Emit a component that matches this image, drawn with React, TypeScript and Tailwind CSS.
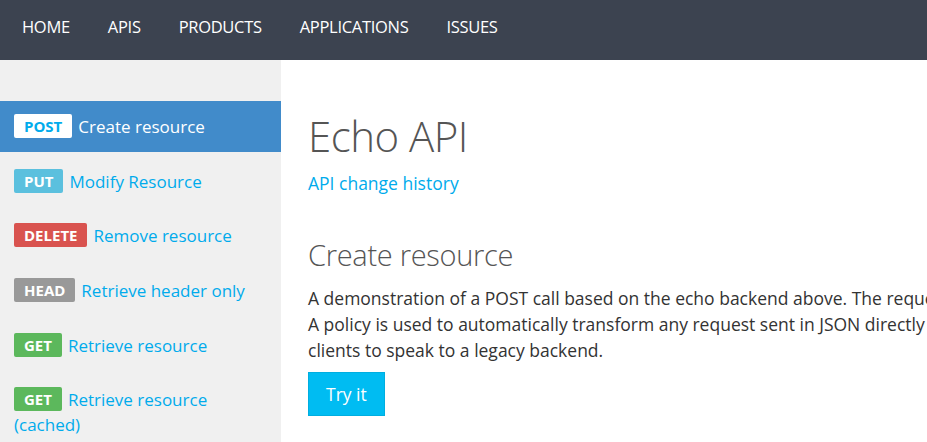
import React from "react";

const items = [
  { m: "POST", t: "Create resource", badge: "bg-white text-[#00abec]", active: true },
  { m: "PUT", t: "Modify Resource", badge: "bg-[#5bc0de] text-white" },
  { m: "DELETE", t: "Remove resource", badge: "bg-[#d9534f] text-white" },
  { m: "HEAD", t: "Retrieve header only", badge: "bg-[#999999] text-white" },
  { m: "GET", t: "Retrieve resource", badge: "bg-[#5cb85c] text-white" },
  { m: "GET", t: "Retrieve resource (cached)", badge: "bg-[#5cb85c] text-white" },
];

export default function App() {
  return (
    <div className="w-[927px] h-[442px] overflow-hidden bg-white flex flex-col" style={{ fontFamily: '"Open Sans", "Noto Sans", sans-serif' }}>
      <nav className="h-[60px] bg-[#3c4350] flex items-center pl-[3px] pb-[5px] shrink-0">
        {["HOME", "APIS", "PRODUCTS", "APPLICATIONS", "ISSUES"].map((n) => (
          <a key={n} className="px-[19px] text-white text-[16.5px] tracking-[-0.3px]">{n}</a>
        ))}
      </nav>
      <div className="flex flex-1 min-h-0">
        <aside className="w-[281px] shrink-0 bg-[#f0f0f0] pt-[41px] flex flex-col gap-[3.7px]">
          {items.map((it, i) => (
            <div
              key={i}
              className={`min-h-[51px] pl-[14px] pr-2 pt-[13px] text-[17px] leading-[25px] ${it.active ? "bg-[#418bca] text-white" : "text-[#00abec]"}`}
            >
              <span className={`inline-block rounded-[2px] px-[10px] h-[24px] leading-[24px] text-[15px] font-bold mr-[6px] align-[1px] ${it.badge}`}>{it.m}</span>
              {it.t}
            </div>
          ))}
        </aside>
        <main className="flex-1 pl-[27px] pt-[50px] text-[#333]">
          <h1 className="text-[42px] font-light text-[#555] leading-[52px] tracking-[-0.5px]">Echo API</h1>
          <a className="block text-[#00abec] text-[17.5px] mt-[9px] leading-[25px]">API change history</a>
          <h2 className="mt-[40px] text-[29px] font-light text-[#555] leading-[38px] tracking-[-0.3px]">Create resource</h2>
          <p className="mt-[11px] text-[17.5px] leading-[26px] whitespace-nowrap">
            A demonstration of a POST call based on the echo backend above. The request payload is echoed back.
            <br />
            A policy is used to automatically transform any request sent in JSON directly to XML, allowing
            <br />
            clients to speak to a legacy backend.
          </p>
          <button className="mt-[9px] h-[44px] px-[17px] bg-[#00bcf2] border border-[#00aee0] text-white text-[17.5px]">Try it</button>
        </main>
      </div>
    </div>
  );
}
